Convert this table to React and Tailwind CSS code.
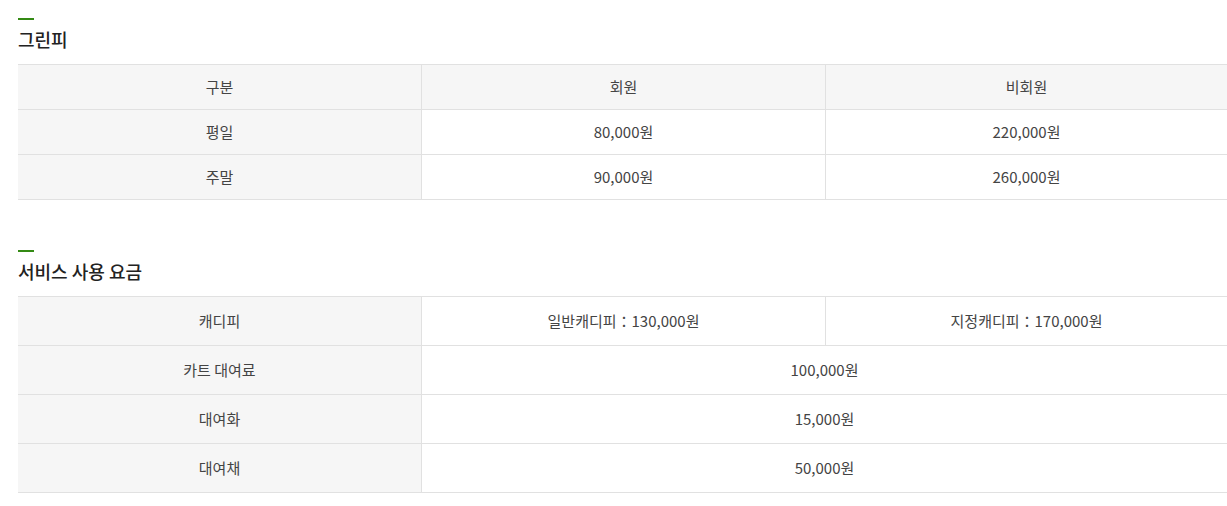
import React from 'react';

const greenFee = [
  ['구분', '회원', '비회원'],
  ['평일', '80,000원', '220,000원'],
  ['주말', '90,000원', '260,000원'],
];

const services = [
  { label: '캐디피', cells: ['일반캐디피：130,000원', '지정캐디피：170,000원'] },
  { label: '카트 대여료', cells: ['100,000원'] },
  { label: '대여화', cells: ['15,000원'] },
  { label: '대여채', cells: ['50,000원'] },
];

const SectionTitle = ({ children }) => (
  <div>
    <div className="w-4 h-[2px] bg-[#348a14]" />
    <h3 className="mt-[7px] mb-[13px] text-[18px] leading-[24px] font-medium text-[#222]">{children}</h3>
  </div>
);

const App = () => {
  return (
    <div className="min-h-screen bg-white pl-[18px] pt-[18px] font-['Noto_Sans_CJK_KR','Noto_Sans',sans-serif] text-[#444]">
      {/* 그린피 */}
      <section>
        <SectionTitle>그린피</SectionTitle>
        <div className="grid grid-cols-[403px_404px_1fr] border-t border-[#e1e1e1] text-[15px]">
          {greenFee.map((row, i) =>
            row.map((cell, j) => (
              <div
                key={`${i}-${j}`}
                className={`h-[44px] box-content flex items-center justify-center border-b border-[#e1e1e1] ${
                  j > 0 ? 'border-l' : ''
                } ${i === 0 || j === 0 ? 'bg-[#f6f6f6]' : 'bg-white'}`}
              >
                {cell}
              </div>
            ))
          )}
        </div>
      </section>

      {/* 서비스 사용 요금 */}
      <section className="mt-[50px]">
        <SectionTitle>서비스 사용 요금</SectionTitle>
        <div className="grid grid-cols-[403px_404px_1fr] border-t border-[#e1e1e1] text-[15px]">
          {services.map((row) => (
            <React.Fragment key={row.label}>
              <div className="h-[48px] box-content flex items-center justify-center border-b border-[#e1e1e1] bg-[#f6f6f6]">
                {row.label}
              </div>
              {row.cells.length === 2 ? (
                row.cells.map((c) => (
                  <div
                    key={c}
                    className="h-[48px] box-content flex items-center justify-center border-b border-l border-[#e1e1e1]"
                  >
                    {c}
                  </div>
                ))
              ) : (
                <div className="col-span-2 h-[48px] box-content flex items-center justify-center border-b border-l border-[#e1e1e1]">
                  {row.cells[0]}
                </div>
              )}
            </React.Fragment>
          ))}
        </div>
      </section>
    </div>
  );
};

export default App;
